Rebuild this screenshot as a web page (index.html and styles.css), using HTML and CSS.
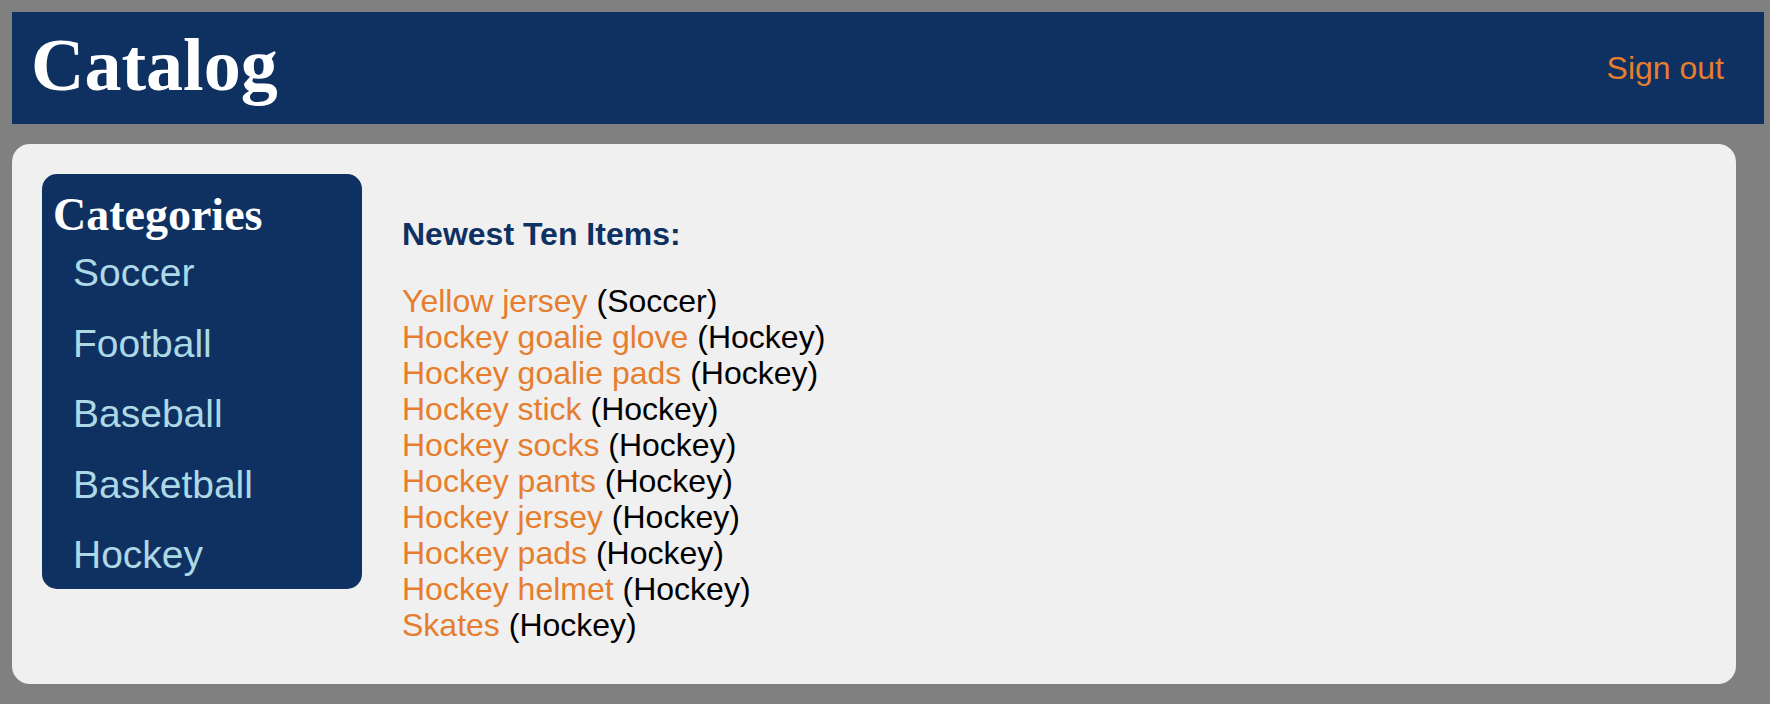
FILE: index.html
```html
<!DOCTYPE html>
<html lang="en">
<head>
<meta charset="utf-8">
<title>Catalog</title>
<link rel="stylesheet" href="styles.css">
</head>
<body>
<header class="topbar">
  <h1 class="brand">Catalog</h1>
  <a class="signout" href="#">Sign out</a>
</header>
<main class="panel">
  <nav class="sidebar">
    <h2 class="sidebar-title">Categories</h2>
    <ul class="cat-list">
      <li><a href="#">Soccer</a></li>
      <li><a href="#">Football</a></li>
      <li><a href="#">Baseball</a></li>
      <li><a href="#">Basketball</a></li>
      <li><a href="#">Hockey</a></li>
    </ul>
  </nav>
  <section class="content">
    <h3 class="content-title">Newest Ten Items:</h3>
    <ul class="items">
      <li><a href="#">Yellow jersey</a> (Soccer)</li>
      <li><a href="#">Hockey goalie glove</a> (Hockey)</li>
      <li><a href="#">Hockey goalie pads</a> (Hockey)</li>
      <li><a href="#">Hockey stick</a> (Hockey)</li>
      <li><a href="#">Hockey socks</a> (Hockey)</li>
      <li><a href="#">Hockey pants</a> (Hockey)</li>
      <li><a href="#">Hockey jersey</a> (Hockey)</li>
      <li><a href="#">Hockey pads</a> (Hockey)</li>
      <li><a href="#">Hockey helmet</a> (Hockey)</li>
      <li><a href="#">Skates</a> (Hockey)</li>
    </ul>
  </section>
</main>
</body>
</html>
```
FILE: styles.css
```css
html, body {
  background: #808080;
}
body {
  margin: 12px 6px 0 12px;
  font-family: "Liberation Sans", Arial, sans-serif;
  font-size: 32px;
  line-height: 36px;
  color: #000;
}
a {
  text-decoration: none;
}
.topbar {
  box-sizing: border-box;
  height: 112px;
  background: #0e3162;
  display: flex;
  justify-content: space-between;
  align-items: flex-start;
  padding: 16px 40px 0 19px;
}
.brand {
  margin: 0;
  font-family: "Liberation Serif", "Times New Roman", serif;
  font-weight: bold;
  font-size: 74px;
  line-height: 74px;
  color: #fff;
}
.signout {
  margin-top: 22px;
  font-size: 32px;
  line-height: normal;
  color: #e67e2e;
}
.panel {
  box-sizing: border-box;
  margin: 20px 28px 0 0;
  background: #f0f0f0;
  border-radius: 18px;
  padding: 30px 30px 41px 30px;
  display: flex;
  align-items: flex-start;
  gap: 40px;
}
.sidebar {
  box-sizing: border-box;
  width: 320px;
  background: #0e3162;
  border-radius: 15px;
  padding: 14px 11px 12px 11px;
}
.sidebar-title {
  margin: 0;
  font-family: "Liberation Serif", "Times New Roman", serif;
  font-weight: bold;
  font-size: 46px;
  line-height: normal;
  color: #fff;
}
.cat-list {
  list-style: none;
  margin: 9px 0 0 0;
  padding: 0 0 0 20px;
  display: flex;
  flex-direction: column;
  gap: 25.5px;
}
.cat-list a {
  display: block;
  font-size: 39px;
  line-height: 45px;
  color: #add8e6;
}
.content {
  flex: 1;
}
.content-title {
  margin: 42px 0 31px 0;
  font-size: 32px;
  font-weight: bold;
  color: #0e3162;
}
.items {
  list-style: none;
  margin: 0;
  padding: 0;
}
.items a {
  color: #e67e2e;
}
```
